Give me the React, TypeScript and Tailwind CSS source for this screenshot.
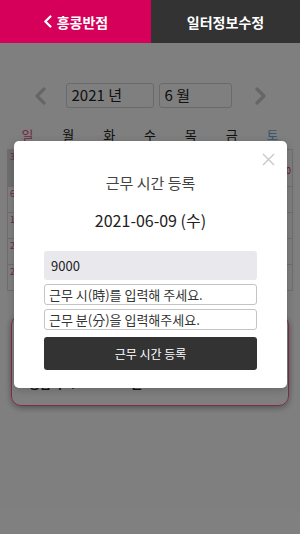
import React from "react";

const font = { fontFamily: '"Noto Sans CJK KR", "Noto Sans", sans-serif' };

function Chevron({ dir, className }: { dir: "l" | "r"; className?: string }) {
  return (
    <svg width="12" height="18" viewBox="0 0 12 18" className={className}>
      <path
        d={dir === "l" ? "M10 2 L3 9 L10 16" : "M2 2 L9 9 L2 16"}
        fill="none"
        stroke="currentColor"
        strokeWidth="3.2"
        strokeLinecap="round"
        strokeLinejoin="round"
      />
    </svg>
  );
}

const weekdays = ["일", "월", "화", "수", "목", "금", "토"];
const weeks: { d: string; amt?: string; prev?: boolean }[][] = [
  [
    { d: "30", prev: true },
    { d: "31", prev: true },
    { d: "1" },
    { d: "2" },
    { d: "3" },
    { d: "4" },
    { d: "5", amt: "9,000" },
  ],
  [{ d: "6" }, { d: "7" }, { d: "8" }, { d: "9" }, { d: "10" }, { d: "11" }, { d: "12" }],
  [{ d: "13" }, { d: "14" }, { d: "15" }, { d: "16" }, { d: "17" }, { d: "18" }, { d: "19" }],
  [{ d: "20" }, { d: "21" }, { d: "22" }, { d: "23" }, { d: "24" }, { d: "25" }, { d: "26" }],
  [{ d: "27" }, { d: "28" }, { d: "29" }, { d: "30" }, { d: "1", prev: true }, { d: "2", prev: true }, { d: "3", prev: true }],
];

export default function App() {
  return (
    <div className="relative w-[300px] h-[534px] overflow-hidden bg-white" style={font}>
      {/* Header */}
      <div className="flex h-[43px]">
        <div className="flex w-[151px] items-center justify-center gap-[5px] bg-[#d6005a] text-white">
          <Chevron dir="l" className="w-[9px] h-[13px] text-white" />
          <span className="text-[14px] font-bold leading-none">흥콩반점</span>
        </div>
        <div className="flex flex-1 items-center justify-center bg-[#333333] text-white">
          <span className="text-[14px] font-bold leading-none">일터정보수정</span>
        </div>
      </div>

      {/* Page content */}
      <div className="px-[7px]">
        <div className="mt-[40px] flex items-center justify-center">
          <Chevron dir="l" className="text-[#cccccc] mr-[20px]" />
          <div className="flex h-[25px] w-[88px] items-center rounded-[3px] border border-[#d4d4d4] px-[5px] text-[15px] text-[#222]">
            2021 년
          </div>
          <div className="ml-[5px] flex h-[25px] w-[73px] items-center rounded-[3px] border border-[#d4d4d4] px-[5px] text-[15px] text-[#222]">
            6 월
          </div>
          <Chevron dir="r" className="text-[#cccccc] ml-[23px]" />
        </div>

        <div className="mt-[18px] grid grid-cols-7 text-center text-[13px] leading-[18px]">
          {weekdays.map((w, i) => (
            <div
              key={w}
              className={i === 0 ? "text-[#e0577f]" : i === 6 ? "text-[#6fb0d8]" : "text-[#222]"}
            >
              {w}
            </div>
          ))}
        </div>

        <div className="mt-[5px] border-l border-t border-[#dcdcdc]">
          {weeks.map((row, ri) => (
            <div key={ri} className={`grid grid-cols-7 ${ri === 0 ? "h-[37px]" : "h-[26px]"}`}>
              {row.map((c, ci) => (
                <div
                  key={ci}
                  className={`relative border-b border-r border-[#dcdcdc] px-[2px] pt-[2px] text-[9px] leading-none ${
                    ri === 0 && ci === 0 ? "bg-[#dddddd]" : ""
                  } ${ci === 0 ? "text-[#e0577f]" : ci === 6 ? "text-[#7fb3d0]" : "text-[#666]"}`}
                >
                  {c.d}
                  {c.amt && (
                    <div className="absolute right-[1px] top-[16px] text-[9px] text-[#e02040]">{c.amt}</div>
                  )}
                </div>
              ))}
            </div>
          ))}
        </div>

        <div className="mx-[4px] mt-[24px] h-[91px] rounded-[10px] border border-[#ff5a8c] shadow-[0_2px_6px_rgba(0,0,0,0.35)] px-[17px] pt-[61px]">
          <div className="flex text-[12px] font-bold leading-[14px] text-[#222]">
            <span className="w-[42px]">총급여</span>
            <span className="w-[60px]">:</span>
            <span>원</span>
          </div>
        </div>
      </div>

      {/* Overlay */}
      <div className="absolute inset-x-0 bottom-0 top-[43px] bg-black/50" />

      {/* Modal */}
      <div className="absolute left-[14px] top-[141px] w-[273px] h-[247px] rounded-[5px] bg-white px-[30px] shadow-[0_2px_8px_rgba(0,0,0,0.2)]">
        <button className="absolute right-[12px] top-[12px] text-[#c8c8c8]">
          <svg width="13" height="13" viewBox="0 0 13 13">
            <path d="M1 1 L12 12 M12 1 L1 12" stroke="currentColor" strokeWidth="1.4" />
          </svg>
        </button>
        <div className="pt-[32px] text-center text-[15px] leading-[20px] text-[#444]">근무 시간 등록</div>
        <div className="mt-[16px] text-center text-[16px] leading-[22px] text-[#222]">2021-06-09 (수)</div>
        <div className="mt-[20px] flex h-[29px] items-center rounded-[3px] bg-[#e9e9ed] px-[7px] text-[13px] text-[#222]">
          9000
        </div>
        <div className="mt-[4px] flex h-[21px] items-center rounded-[3px] border border-[#c4c4c4] px-[4px] text-[13px] text-[#333]">
          근무 시(時)를 입력해 주세요.
        </div>
        <div className="mt-[4px] flex h-[21px] items-center rounded-[3px] border border-[#c4c4c4] px-[4px] text-[13px] text-[#333]">
          근무 분(分)을 입력해주세요.
        </div>
        <button className="mt-[7px] flex h-[33px] w-full items-center justify-center rounded-[3px] bg-[#333333] text-[12px] text-white">
          근무 시간 등록
        </button>
      </div>
    </div>
  );
}
